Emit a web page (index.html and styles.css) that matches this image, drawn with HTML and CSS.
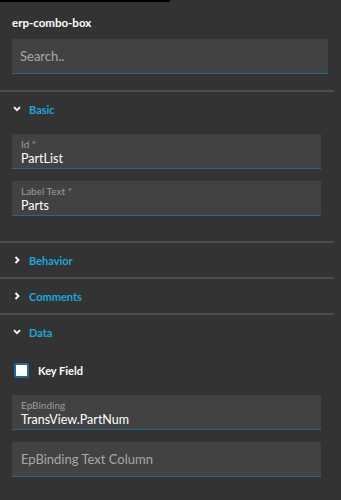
FILE: index.html
```html
<!DOCTYPE html>
<html>
<head>
<meta charset="utf-8">
<link rel="stylesheet" href="styles.css">
</head>
<body>
<div class="topbar"></div>
<div class="panel">
  <div class="title">erp-combo-box</div>
  <div class="search"><span class="placeholder">Search..</span></div>
  <div class="divider"></div>
  <div class="section">
    <div class="sec-head">
      <svg class="chev" viewBox="0 0 8 8" width="8" height="8"><path d="M1 2.2 L4 5.2 L7 2.2" fill="none" stroke="#fff" stroke-width="1.8"/></svg>
      <span>Basic</span>
    </div>
    <div class="sec-body">
      <div class="field"><div class="flabel">Id *</div><div class="fvalue">PartList</div></div>
      <div class="field"><div class="flabel">Label Text *</div><div class="fvalue">Parts</div></div>
    </div>
  </div>
  <div class="divider"></div>
  <div class="sec-head closed">
    <svg class="chev" viewBox="0 0 8 8" width="8" height="8"><path d="M2.5 1 L5.5 4 L2.5 7" fill="none" stroke="#fff" stroke-width="1.8"/></svg>
    <span>Behavior</span>
  </div>
  <div class="divider"></div>
  <div class="sec-head closed">
    <svg class="chev" viewBox="0 0 8 8" width="8" height="8"><path d="M2.5 1 L5.5 4 L2.5 7" fill="none" stroke="#fff" stroke-width="1.8"/></svg>
    <span>Comments</span>
  </div>
  <div class="divider"></div>
  <div class="section">
    <div class="sec-head">
      <svg class="chev" viewBox="0 0 8 8" width="8" height="8"><path d="M1 2.2 L4 5.2 L7 2.2" fill="none" stroke="#fff" stroke-width="1.8"/></svg>
      <span>Data</span>
    </div>
    <div class="sec-body">
      <div class="check-row"><span class="checkbox"></span><span class="check-label">Key Field</span></div>
      <div class="field"><div class="flabel">EpBinding</div><div class="fvalue">TransView.PartNum</div></div>
      <div class="field empty"><div class="fplaceholder">EpBinding Text Column</div></div>
    </div>
  </div>
</div>
</body>
</html>
```
FILE: styles.css
```css
html, body {
  margin: 0;
  padding: 0;
  background: #333333;
  width: 341px;
  height: 500px;
  overflow: hidden;
  font-family: Lato, "Open Sans", sans-serif;
  color: #ffffff;
}
.topbar {
  width: 170px;
  height: 2px;
  background: #000;
}
.panel {
  width: 334px;
}
.title {
  padding: 14px 0 0 12px;
  height: 23px;
  font-size: 11.5px;
  font-weight: 700;
  line-height: 14px;
}
.search {
  margin: 0 6px 0 12px;
  height: 34px;
  background: #424242;
  border-bottom: 1px solid #1d6a96;
  display: flex;
  align-items: center;
  padding-left: 8px;
}
.placeholder {
  font-size: 13px;
  color: #a8a8a8;
}
.divider {
  height: 2px;
  background: #4d4d4d;
}
.search + .divider {
  margin-top: 16px;
}
.sec-head {
  display: flex;
  align-items: center;
  height: 34px;
  padding-left: 13px;
  gap: 8px;
  font-size: 11px;
  font-weight: 700;
  color: #1ea6dd;
}
.chev {
  flex: none;
}
.sec-body {
  padding: 8px 13px 0 12px;
  display: flex;
  flex-direction: column;
  gap: 12px;
}
.section + .divider {
  margin-top: 25px;
}
.field {
  background: #424242;
  border-bottom: 1px solid #1d6a96;
  padding: 5px 0 0 9px;
  box-sizing: border-box;
  height: 35px;
}
.flabel {
  font-size: 10px;
  color: #9a9a9a;
  line-height: 11px;
}
.fvalue {
  font-size: 12.5px;
  line-height: 17px;
  color: #ffffff;
  font-weight: 400;
}
.field.empty {
  display: flex;
  align-items: center;
  padding-top: 0;
}
.fplaceholder {
  font-size: 13px;
  color: #a8a8a8;
}
.check-row {
  display: flex;
  align-items: center;
  gap: 9px;
  padding-left: 2px;
  height: 16px;
  margin-top: 5px;
  margin-bottom: 5px;
}
.checkbox {
  width: 11px;
  height: 11px;
  border: 2px solid #1d6a96;
  background: #ffffff;
  border-radius: 2px;
}
.check-label {
  font-size: 11px;
  font-weight: 700;
}
```
